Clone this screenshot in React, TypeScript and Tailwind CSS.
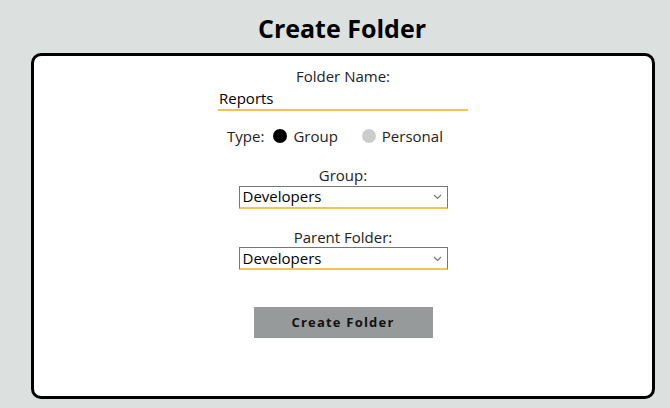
import { useState } from "react";

function Chevron() {
  return (
    <svg
      className="absolute right-[6px] top-[9px] pointer-events-none"
      width="9"
      height="6"
      viewBox="0 0 9 6"
      fill="none"
    >
      <path d="M1 1l3.5 3.5L8 1" stroke="#777" strokeWidth="1.2" />
    </svg>
  );
}

export default function App() {
  const [name, setName] = useState("Reports");
  const [type, setType] = useState("group");

  return (
    <div
      className="w-[670px] h-[408px] bg-[#dce0df] overflow-hidden"
      style={{ fontFamily: '"Open Sans", "DejaVu Sans", sans-serif' }}
    >
      <h1 className="text-center text-[25px] font-bold text-black pt-[8px] leading-[40px] pl-[14px]">
        Create Folder
      </h1>
      <div className="ml-[31px] mt-[5px] w-[624px] h-[346px] bg-white border-[3px] border-black rounded-[10px] flex flex-col items-center pt-[10px] text-[15px] text-[#222]">
        <label htmlFor="folder-name" className="leading-[20px]">
          Folder Name:
        </label>
        <input
          id="folder-name"
          value={name}
          onChange={(e) => setName(e.target.value)}
          className="w-[250px] border-b-2 border-[#f5c24c] outline-none leading-[23px] h-[25px] px-[1px] text-black"
        />
        <div className="flex items-center mt-[15px] leading-[20px] pr-[16px]">
          <span className="mr-[9px]">Type:</span>
          <button
            onClick={() => setType("group")}
            className="flex items-center gap-[6px]"
          >
            <span
              className={
                "w-[14px] h-[14px] rounded-full " +
                (type === "group" ? "bg-black" : "bg-[#cccccc]")
              }
            />
            Group
          </button>
          <button
            onClick={() => setType("personal")}
            className="flex items-center gap-[6px] ml-[24px]"
          >
            <span
              className={
                "w-[14px] h-[14px] rounded-full " +
                (type === "personal" ? "bg-black" : "bg-[#cccccc]")
              }
            />
            Personal
          </button>
        </div>
        <label htmlFor="group" className="mt-[19px] leading-[20px]">
          Group:
        </label>
        <div className="relative">
          <select
            id="group"
            className="appearance-none w-[209px] h-[23px] border border-[#767676] border-b-2 border-b-[#f5c24c] text-[15px] leading-[19px] text-black pl-[3px] outline-none bg-white"
          >
            <option>Developers</option>
          </select>
          <Chevron />
        </div>
        <label htmlFor="parent" className="mt-[18px] leading-[20px]">
          Parent Folder:
        </label>
        <div className="relative">
          <select
            id="parent"
            className="appearance-none w-[209px] h-[23px] border border-[#767676] border-b-2 border-b-[#f5c24c] text-[15px] leading-[19px] text-black pl-[3px] outline-none bg-white"
          >
            <option>Developers</option>
          </select>
          <Chevron />
        </div>
        <button className="mt-[37px] w-[179px] h-[31px] bg-[#969a9b] text-[13px] font-bold tracking-[1.2px] text-[#111]">
          Create Folder
        </button>
      </div>
    </div>
  );
}
